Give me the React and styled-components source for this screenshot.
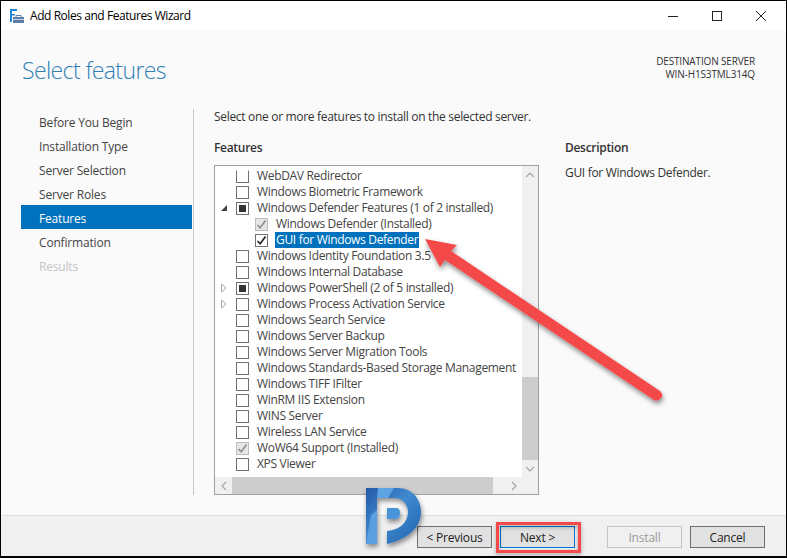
import React from "react";
import styled, { createGlobalStyle } from "styled-components";

const Global = createGlobalStyle`
  html, body { margin: 0; padding: 0; background: #000; }
  * { box-sizing: border-box; }
`;
const Window = styled.div`
  width: 787px; height: 558px; display: flex; flex-direction: column;
  background: #fafafa; border: 1px solid #000; border-bottom-width: 2px; position: relative;
  overflow: hidden; font-family: "Open Sans", "Noto Sans", sans-serif; font-size: 12px; color: #333;
`;
const TitleBar = styled.div`
  height: 29px; background: #fff; display: flex; align-items: center; padding-left: 9px; color: #000; flex: none;
`;
const TitleText = styled.span`margin-left: 4px; letter-spacing: -0.44px;`;
const Controls = styled.div`margin-left: auto; display: flex; align-items: center; gap: 32px; padding-right: 19px;`;
const Header = styled.div`
  height: 79px; flex: none; display: flex; justify-content: space-between; padding: 23px 31px 0 21px;
`;
const Title = styled.h1`
  margin: 0; font-size: 23px; line-height: 34px; font-weight: 300; color: #2f7fb5; letter-spacing: -0.6px;
`;
const Dest = styled.div`
  text-align: right; font-size: 10px; line-height: 13px; padding-top: 2px; color: #333; letter-spacing: -0.15px;
`;
const Main = styled.div`height: 386px; flex: none; display: flex;`;
const Nav = styled.nav`
  width: 193px; flex: none; padding-left: 20px; border-right: 1px solid #c8c8c8; margin-right: 20px;
`;
const NavItem = styled.div`
  width: 171px; height: 24px; line-height: 27px; padding-left: 18px; letter-spacing: -0.18px;
  background: ${p => (p.$active ? "#0071bc" : "transparent")};
  color: ${p => (p.$active ? "#fff" : p.$disabled ? "#c4c4c4" : "#444")};
`;
const Content = styled.div`flex: 1; display: flex; flex-direction: column;`;
const Intro = styled.div`height: 16px; line-height: 16px; margin-bottom: 15px; letter-spacing: -0.31px;`;
const Columns = styled.div`display: grid; grid-template-columns: 325px 1fr; column-gap: 26px;`;
const Label = styled.div`height: 16px; line-height: 16px; margin-bottom: 9px; font-weight: 600; letter-spacing: -0.3px;`;
const DescText = styled.div`line-height: 16px; letter-spacing: -0.31px;`;
const ListBox = styled.div`
  height: 330px; border: 1px solid #a0a0a0; background: #fff; display: grid;
  grid-template-columns: 1fr 16px; grid-template-rows: 1fr 17px;
`;
const Rows = styled.div`padding-top: 2px; overflow: hidden;`;
const Row = styled.div`
  height: 16px; display: flex; align-items: center; padding-left: ${p => (p.$child ? 24 : 5)}px;
`;
const Exp = styled.div`width: 16px; height: 16px; flex: none; display: flex; align-items: center;`;
const Box = styled.div`
  width: 13px; height: 13px; flex: none; display: flex; align-items: center; justify-content: center;
  border: 1px solid ${p => (p.$dis ? "#bcbcbc" : "#707070")};
  border-top-color: ${p => (p.$clip ? "transparent" : p.$dis ? "#bcbcbc" : "#707070")};
  background: ${p => (p.$dis ? "#e6e6e6" : "#fff")};
`;
const Partial = styled.div`width: 7px; height: 7px; background: #333;`;
const RowText = styled.span`
  margin-left: ${p => (p.$sel ? 7 : 8)}px; padding: 0 ${p => (p.$sel ? 1 : 0)}px; line-height: 16px; white-space: nowrap; letter-spacing: -0.32px;
  background: ${p => (p.$sel ? "#0071bc" : "transparent")};
  color: ${p => (p.$sel ? "#fff" : "#444")};
`;
const VBar = styled.div`background: #f0f0f0; display: flex; flex-direction: column;`;
const ArrowBtn = styled.div`
  width: ${p => p.$w || 16}px; height: 17px; flex: none; display: flex; align-items: center; justify-content: center;
`;
const VTrack = styled.div`flex: 1; display: flex; flex-direction: column; justify-content: flex-end;`;
const VThumb = styled.div`height: 83px; background: #cdcdcd;`;
const HBar = styled.div`background: #f0f0f0; display: flex; height: 17px;`;
const HThumb = styled.div`width: 261px; background: #cdcdcd;`;
const HRest = styled.div`flex: 1; display: flex; justify-content: flex-end;`;
const Corner = styled.div`background: #f0f0f0;`;
const Footer = styled.div`
  margin-top: 20px; flex: 1; background: #f0f0f0; border-top: 1px solid #dfdfdf;
  display: flex; align-items: flex-start; padding: 10px 21px 0 0; justify-content: flex-end;
`;
const Btn = styled.div`
  width: 75px; height: 22px; display: flex; align-items: center; justify-content: center; letter-spacing: -0.2px;
  margin-left: ${p => (p.$far ? 32 : 8)}px; position: relative;
  background: ${p => (p.$dis ? "#f0f0f0" : "#e1e1e1")};
  border: 1px solid ${p => (p.$dis ? "#c4c4c4" : p.$focus ? "#0078d7" : "#6e6e6e")};
  color: ${p => (p.$dis ? "#9a9a9a" : "#222")};
`;
const Highlight = styled.div`
  position: absolute; left: -5px; top: -5px; width: 85px; height: 31px; border: 3px solid #f44a4a;
  filter: drop-shadow(0 2px 2px rgba(0,0,0,.35));
`;
const Overlay = styled.svg`position: absolute; left: -1px; top: -1px; pointer-events: none;`;

const Up = () => <svg width="10" height="6" viewBox="0 0 10 6"><path d="M1 5l4-4 4 4" fill="none" stroke="#a6a6a6" strokeWidth="1.2"/></svg>;
const Down = () => <svg width="10" height="6" viewBox="0 0 10 6"><path d="M1 1l4 4 4-4" fill="none" stroke="#a6a6a6" strokeWidth="1.2"/></svg>;
const Left = () => <svg width="6" height="10" viewBox="0 0 6 10"><path d="M5 1L1 5l4 4" fill="none" stroke="#a6a6a6" strokeWidth="1.2"/></svg>;
const Right = () => <svg width="6" height="10" viewBox="0 0 6 10"><path d="M1 1l4 4-4 4" fill="none" stroke="#a6a6a6" strokeWidth="1.2"/></svg>;
const Check = ({ c }) => <svg width="11" height="11" viewBox="0 0 11 11"><path d="M1.5 6l2.7 2.8L9.5 1.6" fill="none" stroke={c} strokeWidth="1.7"/></svg>;
const Open = () => <svg width="8" height="8" viewBox="0 0 8 8"><path d="M7 1v6H1z" fill="#444"/></svg>;
const Closed = () => <svg width="8" height="10" viewBox="0 0 8 10"><path d="M1.5 1l4.5 4-4.5 4z" fill="none" stroke="#a6a6a6"/></svg>;

const items = [
  { t: "WebDAV Redirector", clip: true },
  { t: "Windows Biometric Framework" },
  { t: "Windows Defender Features (1 of 2 installed)", s: "partial", e: "open" },
  { t: "Windows Defender (Installed)", s: "dis", child: true },
  { t: "GUI for Windows Defender", s: "check", child: true, sel: true },
  { t: "Windows Identity Foundation 3.5" },
  { t: "Windows Internal Database" },
  { t: "Windows PowerShell (2 of 5 installed)", s: "partial", e: "closed" },
  { t: "Windows Process Activation Service", e: "closed" },
  { t: "Windows Search Service" },
  { t: "Windows Server Backup" },
  { t: "Windows Server Migration Tools" },
  { t: "Windows Standards-Based Storage Management" },
  { t: "Windows TIFF IFilter" },
  { t: "WinRM IIS Extension" },
  { t: "WINS Server" },
  { t: "Wireless LAN Service" },
  { t: "WoW64 Support (Installed)", s: "dis" },
  { t: "XPS Viewer" },
];
const nav = ["Before You Begin", "Installation Type", "Server Selection", "Server Roles", "Features", "Confirmation", "Results"];

export default function App() {
  return (
    <Window>
      <Global />
      <TitleBar>
        <svg width="16" height="16" viewBox="0 0 16 16">
          <path d="M0 1h7v2H0zM0 3h2v11H0zM2 6h3v1.5H2z" fill="#1e88d8"/>
          <path d="M3 9h11v6H3z" fill="#5b7fa8"/>
          <path d="M6 9V7.5h5V9" fill="none" stroke="#5b7fa8"/>
          <path d="M3 11.5h11" stroke="#dfe8f2" strokeWidth=".8"/>
        </svg>
        <TitleText>Add Roles and Features Wizard</TitleText>
        <Controls>
          <svg width="12" height="12" viewBox="0 0 12 12"><path d="M1 6.5h10" stroke="#222"/></svg>
          <svg width="12" height="12" viewBox="0 0 12 12"><rect x="1.5" y="1.5" width="9" height="9" fill="none" stroke="#222"/></svg>
          <svg width="12" height="12" viewBox="0 0 12 12"><path d="M1 1l10 10M11 1L1 11" stroke="#222"/></svg>
        </Controls>
      </TitleBar>
      <Header>
        <Title>Select features</Title>
        <Dest>DESTINATION SERVER<br/>WIN-H1S3TML314Q</Dest>
      </Header>
      <Main>
        <Nav>
          {nav.map(n => <NavItem key={n} $active={n === "Features"} $disabled={n === "Results"}>{n}</NavItem>)}
        </Nav>
        <Content>
          <Intro>Select one or more features to install on the selected server.</Intro>
          <Columns>
            <div>
              <Label>Features</Label>
              <ListBox>
                <Rows>
                  {items.map(i => (
                    <Row key={i.t} $child={i.child}>
                      <Exp>{i.e === "open" && <Open/>}{i.e === "closed" && <Closed/>}</Exp>
                      <Box $dis={i.s === "dis"} $clip={i.clip}>
                        {i.s === "partial" && <Partial/>}
                        {i.s === "dis" && <Check c="#8f8f8f"/>}
                        {i.s === "check" && <Check c="#222"/>}
                      </Box>
                      <RowText $sel={i.sel}>{i.t}</RowText>
                    </Row>
                  ))}
                </Rows>
                <VBar>
                  <ArrowBtn><Up/></ArrowBtn>
                  <VTrack><VThumb/></VTrack>
                  <ArrowBtn><Down/></ArrowBtn>
                </VBar>
                <HBar>
                  <ArrowBtn $w={17}><Left/></ArrowBtn>
                  <HThumb/>
                  <HRest><ArrowBtn $w={17}><Right/></ArrowBtn></HRest>
                </HBar>
                <Corner/>
              </ListBox>
            </div>
            <div>
              <Label>Description</Label>
              <DescText>GUI for Windows Defender.</DescText>
            </div>
          </Columns>
        </Content>
      </Main>
      <Footer>
        <Btn>&lt; Previous</Btn>
        <Btn $focus>Next &gt;<Highlight/></Btn>
        <Btn $far $dis>Install</Btn>
        <Btn>Cancel</Btn>
      </Footer>
      <Overlay width="787" height="558" viewBox="0 0 787 558">
        <defs>
          <filter id="sh" x="-10%" y="-10%" width="120%" height="125%">
            <feDropShadow dx="1" dy="3" stdDeviation="2.5" floodColor="#000" floodOpacity=".45"/>
          </filter>
          <linearGradient id="lg" x1="0" y1="0" x2="1" y2="1">
            <stop offset="0" stopColor="#2458a8"/>
            <stop offset=".45" stopColor="#3f8ad0"/>
            <stop offset="1" stopColor="#1f62ad"/>
          </linearGradient>
        </defs>
        <g filter="url(#sh)">
          <path d="M425 239L457 245L451 251L660 391Q664 395 661 398Q658 402 654 400L445 260L440 267Z" fill="#f44a4a"/>
        </g>
        <g filter="url(#sh)">
          <path fill="url(#lg)" d="M366 488H398C413 488 421 500 421 512C421 527 408 539 387 544V531C400 530 408 522 408 512C408 504 402 498 394 498H377V544H366Z"/>
          <path fill="#4a93d8" d="M387 508H396Q400 508 400 513Q400 519 395 519H387Z"/>
          <path fill="#5ea4e2" d="M378 488H394L388 498H377Z"/>
          <path fill="#5a9fdf" d="M366 544L371 515L377 510V544Z"/>
        </g>
      </Overlay>
    </Window>
  );
}
